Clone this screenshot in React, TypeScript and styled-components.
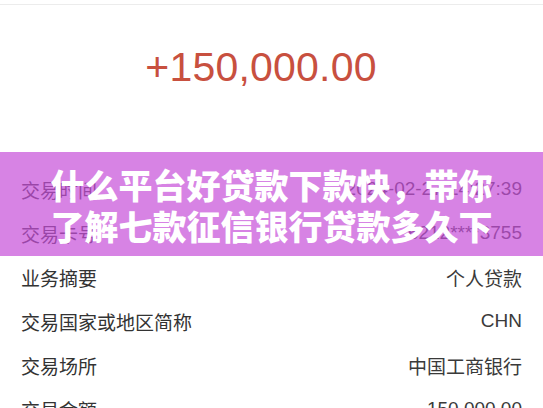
import React from 'react'
import styled, { createGlobalStyle } from 'styled-components'

const GlobalStyle = createGlobalStyle`
  html, body {
    margin: 0;
    padding: 0;
    background: #fff;
    overflow: hidden;
  }

  body {
    font-family: 'Liberation Sans', 'Noto Sans CJK SC', sans-serif;
  }
`

const Screen = styled.div`
  position: relative;
  width: 543px;
  height: 408px;
  overflow: hidden;
  background: #fff;
`

const TopBar = styled.div`
  height: 4px;
  border-bottom: 1px solid #ececec;
`

const AmountBlock = styled.div`
  display: flex;
  justify-content: center;
  padding: 42px 21px 0 0;
  height: 122px;
  box-sizing: border-box;

  span {
    font-size: 41px;
    line-height: 41px;
    color: #c8503f;
    letter-spacing: 0.2px;
  }
`

const DetailList = styled.div`
  display: flex;
  flex-direction: column;
  padding: 40px 21px 0;
`

const Row = styled.div`
  display: flex;
  justify-content: space-between;
  align-items: center;
  height: 44px;
  font-size: 19px;
  color: #333;

  span:last-child {
    color: #3a3a3a;
  }
`

const Banner = styled.div`
  position: absolute;
  top: 152px;
  left: 0;
  right: 0;
  height: 104px;
  display: flex;
  align-items: center;
  justify-content: center;
  background: rgba(198, 78, 216, 0.7);
`

const BannerTitle = styled.h1`
  margin: 0;
  width: 450px;
  text-align: center;
  font-family: 'Noto Sans CJK SC', sans-serif;
  font-size: 34px;
  line-height: 41px;
  font-weight: 900;
  color: #fff;
  padding-top: 2px;
`

const rows: [string, string][] = [
  ['交易时间', '2024-02-27 14:27:39'],
  ['交易卡号', '6212****3755'],
  ['业务摘要', '个人贷款'],
  ['交易国家或地区简称', 'CHN'],
  ['交易场所', '中国工商银行'],
  ['交易金额', '150,000.00'],
]

export default function App(): JSX.Element {
  return (
    <Screen>
      <GlobalStyle />
      <TopBar />
      <AmountBlock>
        <span>+150,000.00</span>
      </AmountBlock>

      <DetailList>
        {rows.map(([label, value]) => (
          <Row key={label}>
            <span>{label}</span>
            <span>{value}</span>
          </Row>
        ))}
      </DetailList>

      <Banner>
        <BannerTitle>什么平台好贷款下款快，带你了解七款征信银行贷款多久下</BannerTitle>
      </Banner>
    </Screen>
  )
}
